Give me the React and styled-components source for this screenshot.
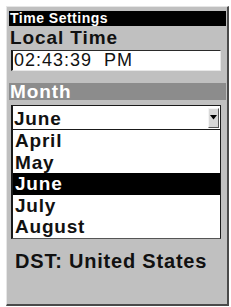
import React from 'react';
import styled, { createGlobalStyle } from 'styled-components';

const colors = {
  page: '#ffffff',
  panel: '#c0c0c0',
  header: '#8c8c8c',
  ink: '#111111',
  white: '#ffffff',
};

const GlobalStyle = createGlobalStyle`
  html, body {
    margin: 0;
    padding: 0;
    background: ${colors.page};
  }
  body {
    font-family: "Liberation Sans", Arial, sans-serif;
  }
`;

const Panel = styled.div`
  margin: 6px 0 0 6px;
  width: 223px;
  height: 300px;
  box-sizing: border-box;
  background: ${colors.panel};
  border-top: 1px solid #e6e6e6;
  border-left: 1px solid #e6e6e6;
  border-right: 2px solid #4a4a4a;
  border-bottom: 2px solid #4a4a4a;
  padding: 4px 1px 0 2px;
  display: flex;
  flex-direction: column;
`;

const TitleBar = styled.div`
  height: 15px;
  background: #000;
  color: ${colors.white};
  font-weight: bold;
  font-size: 14px;
  line-height: 15px;
  letter-spacing: 0.5px;
  padding-left: 1px;
`;

const Label = styled.div`
  height: 24px;
  line-height: 24px;
  font-size: 19px;
  font-weight: bold;
  letter-spacing: 0.9px;
  color: ${colors.ink};
  padding-left: ${props => props.indent || 1}px;
  margin-top: ${props => props.gap || 0}px;
`;

const Field = styled.div`
  margin-left: 2px;
  width: 210px;
  height: 21px;
  box-sizing: border-box;
  background: ${colors.white};
  border-top: 1px solid #2a2a2a;
  border-left: 2px solid #1a1a1a;
  border-right: 1px solid #e8e8e8;
  border-bottom: 1px solid #e8e8e8;
  font-size: 18px;
  line-height: 19px;
  letter-spacing: 1px;
  padding-left: 1px;
  color: ${colors.ink};
  white-space: pre;
`;

const SectionBar = styled.div`
  margin-top: 12px;
  height: 17px;
  line-height: 17px;
  background: ${colors.header};
  color: ${colors.white};
  font-size: 19px;
  font-weight: bold;
  letter-spacing: 0.9px;
  padding-left: 1px;
  overflow: visible;
`;

const Select = styled.div`
  margin: 5px 0 0 2px;
  width: 210px;
  height: 25px;
  box-sizing: border-box;
  background: ${colors.white};
  border: 1px solid #1a1a1a;
  border-left-width: 2px;
  display: flex;
  align-items: center;
  justify-content: space-between;
  padding: 1px 1px 0 1px;
`;

const SelectText = styled.span`
  font-size: 19px;
  font-weight: bold;
  letter-spacing: 0.8px;
  line-height: 23px;
  color: ${colors.ink};
`;

const ArrowButton = styled.span`
  width: 11px;
  height: 20px;
  box-sizing: border-box;
  background: #d8d8d8;
  border-right: 1px solid #555;
  border-bottom: 1px solid #555;
  border-top: 1px solid #f4f4f4;
  border-left: 1px solid #f4f4f4;
  display: flex;
  align-items: center;
  justify-content: center;
  margin-bottom: 1px;
`;

const List = styled.div`
  margin-left: 2px;
  width: 210px;
  box-sizing: border-box;
  background: ${colors.white};
  border: 1px solid #1a1a1a;
  border-left-width: 2px;
  border-top: none;
  border-bottom-color: #555;
`;

const Item = styled.div`
  height: 21.5px;
  line-height: 21.5px;
  font-size: 19px;
  font-weight: bold;
  letter-spacing: 0.8px;
  padding-left: 2px;
  background: ${props => (props.selected ? '#000' : 'transparent')};
  color: ${props => (props.selected ? colors.white : colors.ink)};
`;

const Footer = styled(Label)`
  font-size: 20px;
  letter-spacing: 0.8px;
`;

const months = ['April', 'May', 'June', 'July', 'August'];

const Caret = () => (
  <svg width="7" height="5" viewBox="0 0 7 5">
    <polygon points="0,0 7,0 3.5,4.5" fill="#000" />
  </svg>
);

export default function App() {
  return (
    <>
      <GlobalStyle />
      <Panel>
        <TitleBar>Time Settings</TitleBar>
        <Label>Local Time</Label>
        <Field>02:43:39  PM</Field>
        <SectionBar>Month</SectionBar>
        <Select>
          <SelectText>June</SelectText>
          <ArrowButton>
            <Caret />
          </ArrowButton>
        </Select>
        <List>
          {months.map(m => (
            <Item key={m} selected={m === 'June'}>
              {m}
            </Item>
          ))}
        </List>
        <Footer indent={6} gap={10}>DST: United States</Footer>
      </Panel>
    </>
  );
}
